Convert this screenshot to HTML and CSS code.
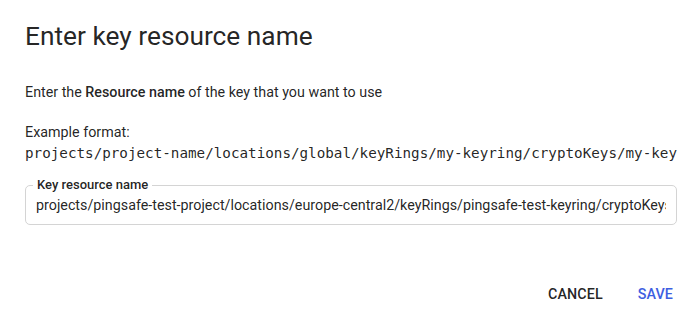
FILE: index.html
```html
<!DOCTYPE html>
<html>
<head>
<meta charset="utf-8">
<link rel="stylesheet" href="styles.css">
</head>
<body>
<div class="dialog">
  <h1 class="title">Enter key resource name</h1>
  <p class="desc">Enter the <strong>Resource name</strong> of the key that you want to use</p>
  <div class="example">
    <div class="example-label">Example format:</div>
    <div class="mono">projects/project-name/locations/global/keyRings/my-keyring/cryptoKeys/my-key</div>
  </div>
  <div class="field">
    <label class="field-label" for="keyname">Key resource name</label>
    <input id="keyname" class="field-input" type="text" value="projects/pingsafe-test-project/locations/europe-central2/keyRings/pingsafe-test-keyring/cryptoKeys/pingsafe-test-key">
  </div>
  <div class="actions">
    <button class="btn btn-cancel">CANCEL</button>
    <button class="btn btn-save">SAVE</button>
  </div>
</div>
</body>
</html>
```
FILE: styles.css
```css
html, body {
  margin: 0;
  padding: 0;
  background: #ffffff;
}
body {
  font-family: Roboto, "Noto Sans", sans-serif;
  color: rgba(0, 0, 0, 0.87);
  overflow: hidden;
}
.dialog {
  width: 697px;
  height: 324px;
  box-sizing: border-box;
  padding: 19px 16px 0 25px;
  display: flex;
  flex-direction: column;
}
.title {
  margin: 0;
  font-size: 26.3px;
  line-height: 34px;
  font-weight: 400;
  color: rgba(0, 0, 0, 0.87);
}
.desc {
  margin: 29px 0 0;
  font-size: 14.3px;
  line-height: 20px;
}
.desc strong {
  font-weight: 500;
}
.example {
  margin-top: 20px;
  font-size: 14.3px;
  line-height: 20px;
}
.mono {
  font-family: "DejaVu Sans Mono", "Liberation Mono", monospace;
  font-size: 14.25px;
  line-height: 22px;
  white-space: nowrap;
}
.field {
  position: relative;
  margin-top: 21px;
  height: 40px;
  box-sizing: border-box;
  border: 1px solid #d4d4d4;
  border-radius: 5px;
  width: 652px;
}
.field-label {
  position: absolute;
  top: -9px;
  left: 7px;
  padding: 0 4px;
  background: #ffffff;
  font-size: 13px;
  line-height: 16px;
  font-weight: 500;
  color: rgba(0, 0, 0, 0.87);
}
.field-input {
  display: block;
  box-sizing: border-box;
  width: 100%;
  height: 38px;
  border: none;
  outline: none;
  background: transparent;
  padding: 0 10px;
  margin: 0;
  font-family: Roboto, "Noto Sans", sans-serif;
  font-size: 14.3px;
  color: rgba(0, 0, 0, 0.87);
}
.actions {
  margin-top: 51px;
  display: flex;
  justify-content: flex-end;
  gap: 19px;
}
.btn {
  height: 36px;
  padding: 0 8px;
  border: none;
  background: transparent;
  font-family: Roboto, "Noto Sans", sans-serif;
  font-size: 14.3px;
  font-weight: 500;
  letter-spacing: 0.1px;
  cursor: pointer;
}
.btn-cancel {
  color: rgba(0, 0, 0, 0.87);
}
.btn-save {
  color: #3d5ee1;
}
```
